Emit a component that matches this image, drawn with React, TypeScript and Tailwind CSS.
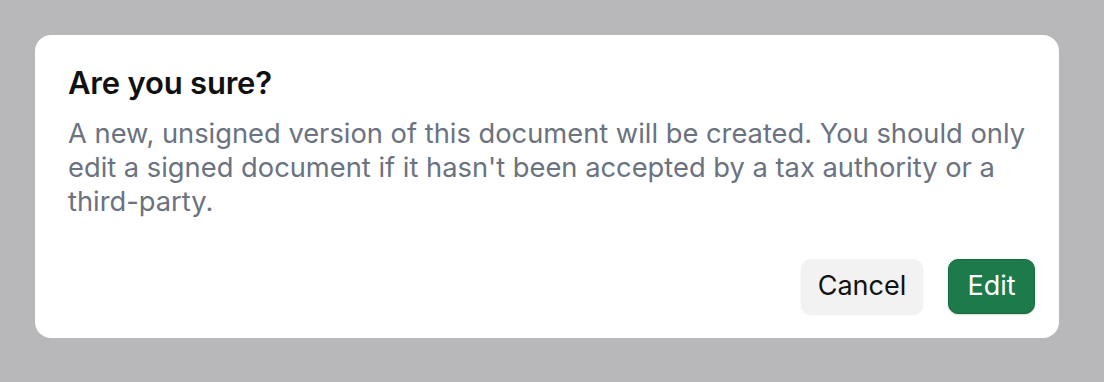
import React from "react";

export default function App() {
  return (
    <div
      className="min-h-screen w-full bg-[#b8b8ba] pt-[35px] pl-[35px]"
      style={{ fontFamily: "Inter, 'Noto Sans', sans-serif" }}
    >
      <div className="w-[1024px] h-[303px] bg-white rounded-[16px] flex flex-col pl-[33px] pr-[24px] pt-[29px] pb-[24px]">
        <h2 className="text-[31px] leading-[38px] font-semibold text-[#111111] tracking-[-0.2px]">
          Are you sure?
        </h2>
        <p className="mt-[15px] text-[27.3px] leading-[34px] text-[#6b7280]">
          A new, unsigned version of this document will be created. You should only edit a signed
          document if it hasn't been accepted by a tax authority or a third-party.
        </p>
        <div className="mt-auto flex justify-end gap-[25px]">
          <button className="h-[55px] w-[122px] rounded-[10px] bg-[#f2f2f3] text-[27px] text-[#111111] shadow-[0_1px_2px_rgba(0,0,0,0.08)]">
            Cancel
          </button>
          <button className="h-[55px] w-[87px] rounded-[10px] bg-[#1d7a4b] text-[27px] text-white border border-[#176a40] shadow-[0_1px_2px_rgba(0,0,0,0.15)]">
            Edit
          </button>
        </div>
      </div>
    </div>
  );
}
